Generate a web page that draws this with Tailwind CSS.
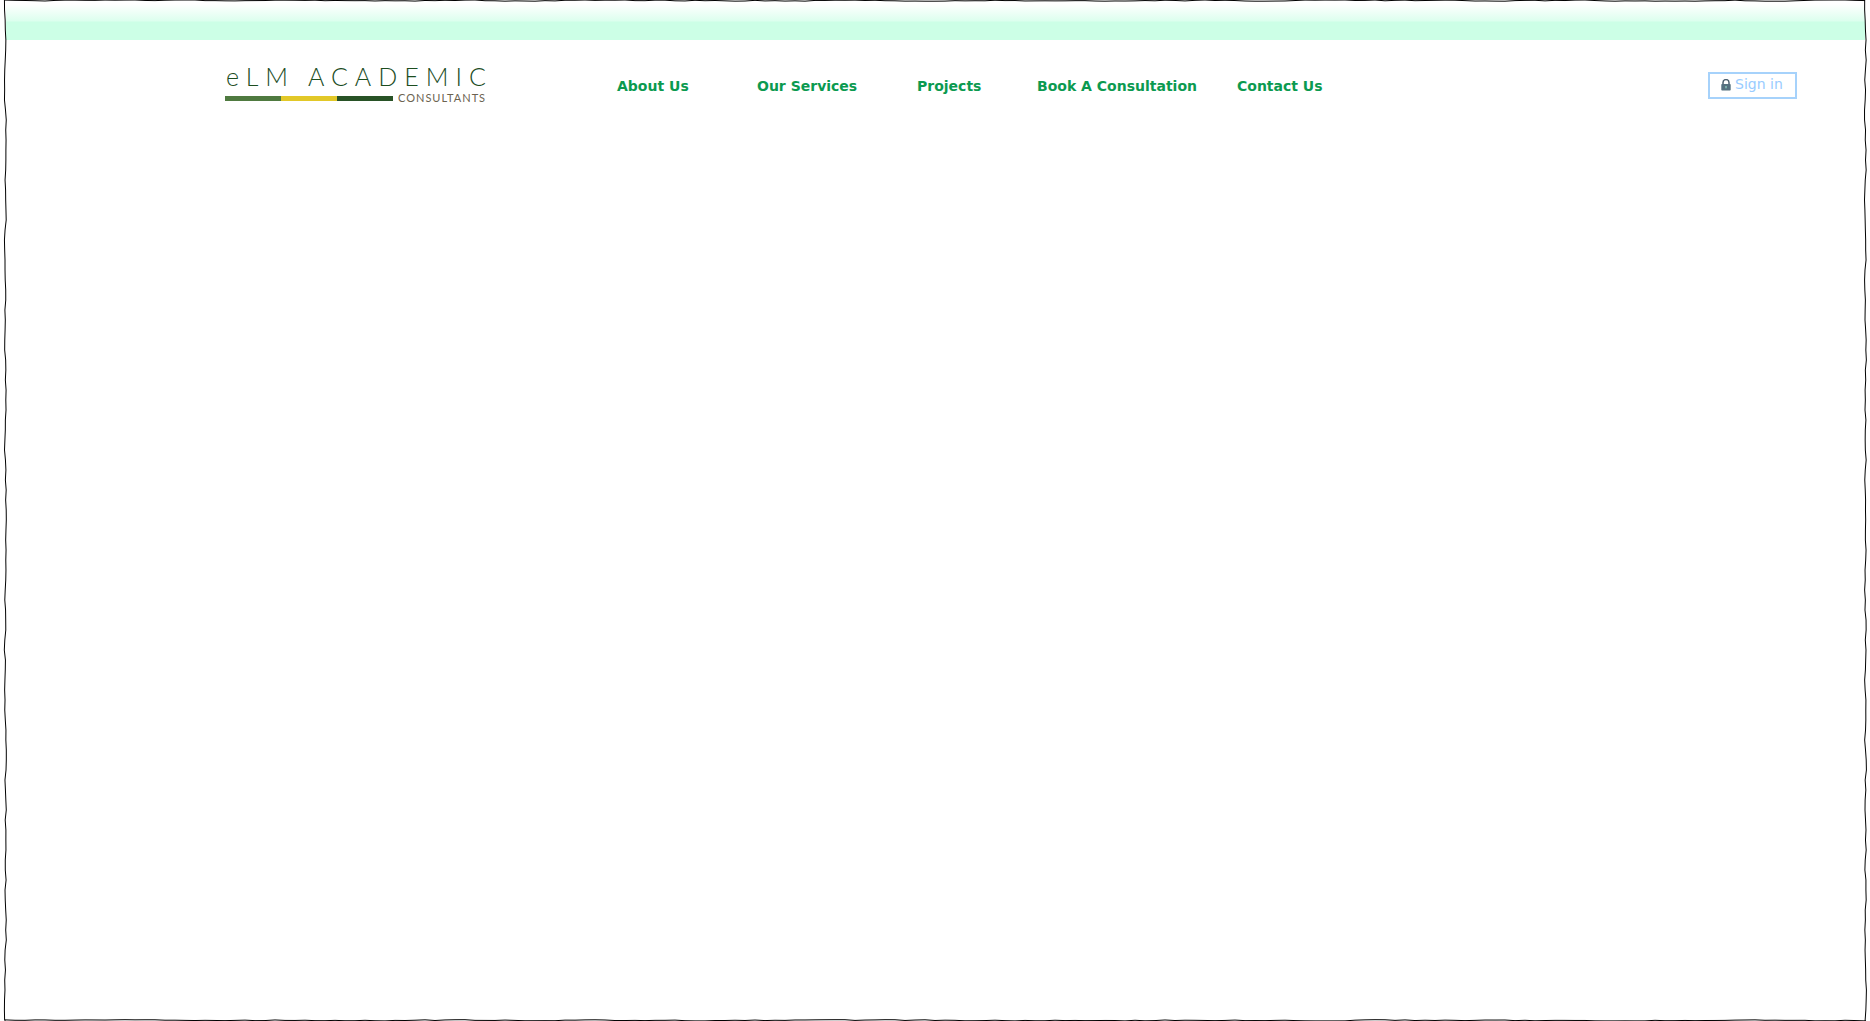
<!DOCTYPE html>
<html lang="en">
<head>
<meta charset="utf-8">
<meta name="viewport" content="width=device-width, initial-scale=1">
<title>eLM Academic Consultants</title>
<script src="https://cdn.jsdelivr.net/npm/@tailwindcss/browser@4"></script>
</head>
<body class="bg-white">
<div class="relative flex min-h-screen flex-col overflow-hidden pl-[6px] pr-[5px]">
  <div class="h-[40px] bg-linear-to-b from-white from-[4px] via-[#dcffee] via-[21px] to-[#ccffe6] to-[22px]"></div>
  <header class="flex items-start pr-[68px] pt-[24px]">
    <a href="#" aria-label="eLM Academic Consultants" class="ml-[219px] block w-[264px] shrink-0 font-['Lato',sans-serif]">
      <span class="block whitespace-nowrap pl-px text-[25px] font-light leading-[24px] tracking-[7px] text-[#1c4d1f]">eLM ACADEMIC</span>
      <span class="mt-[3px] flex items-center gap-[5px]">
        <span class="grid h-[5px] w-[168px] shrink-0 grid-cols-3">
          <span class="bg-[#4f7a40]"></span>
          <span class="bg-[#e2c828]"></span>
          <span class="bg-[#285226]"></span>
        </span>
        <span class="whitespace-nowrap text-[11px] leading-[14px] tracking-[1px] text-[#6b6350]">CONSULTANTS</span>
      </span>
    </a>
    <nav class="ml-[128px] mt-[12px] grid shrink-0 grid-cols-[140px_160px_120px_200px_auto] whitespace-nowrap font-['DejaVu_Sans',sans-serif] text-[14px] font-bold leading-[20px] text-[#0b9a50]">
      <a href="#">About Us</a>
      <a href="#">Our Services</a>
      <a href="#">Projects</a>
      <a href="#">Book A Consultation</a>
      <a href="#">Contact Us</a>
    </nav>
    <button type="button" class="ml-auto mt-[8px] flex h-[27px] w-[89px] items-center whitespace-nowrap border-2 border-[#a6d2fb] pb-[4px] pl-[11px] font-['DejaVu_Sans',sans-serif] text-[14px] leading-[20px] text-[#99ccff]">
      <svg class="mr-[4px] mt-[3px] h-[12px] w-[10px] shrink-0" viewBox="0 0 10 12" aria-hidden="true">
        <path d="M2 6V3.6a3 3 0 0 1 6 0V6" fill="none" stroke="#4e6170" stroke-width="1.5"/>
        <rect x="0.3" y="5" width="9.4" height="6.6" rx="0.8" fill="#55707f"/>
        <path d="M5 7v2.5M4 8h2" stroke="#8fd0c0" stroke-width="0.8"/>
      </svg>
      <span>Sign in</span>
    </button>
  </header>
  <svg id="frame" class="pointer-events-none absolute inset-0 h-full w-full" aria-hidden="true">
    <path fill="none" stroke="#000" stroke-width="1"/>
  </svg>
</div>
<script>
  // Hand-drawn page frame: each edge wanders by up to a pixel every 10px.
  const frame = document.getElementById('frame');
  function edge(length, seed) {
    let s = seed, v = 0;
    const out = [];
    for (let i = 0; i <= length; i += 10) {
      s = (s * 16807) % 2147483647;
      v = v * 0.55 + (s / 2147483647 - 0.5) * 1.7;
      out.push([i, Math.max(-1, Math.min(1, v))]);
    }
    out.push([length, 0]);
    return out;
  }
  function draw() {
    const page = frame.parentElement;
    const w = page.clientWidth, h = page.clientHeight;
    const line = pts => 'M' + pts.map(p => p.join(' ')).join('L');
    const spanX = w - 10;
    frame.querySelector('path').setAttribute('d', [
      line(edge(h, 71).map(([t, v]) => [5.3 + v, t])),
      line(edge(h, 1933).map(([t, v]) => [w - 4.5 + v, t])),
      line(edge(spanX, 407).map(([t, v]) => [5 + t, 0.6 + v * 0.6])),
      line(edge(spanX, 9151).map(([t, v]) => [5 + t, h - 0.7 + v * 0.6]))
    ].join(''));
  }
  new ResizeObserver(draw).observe(frame.parentElement);
</script>
</body>
</html>
